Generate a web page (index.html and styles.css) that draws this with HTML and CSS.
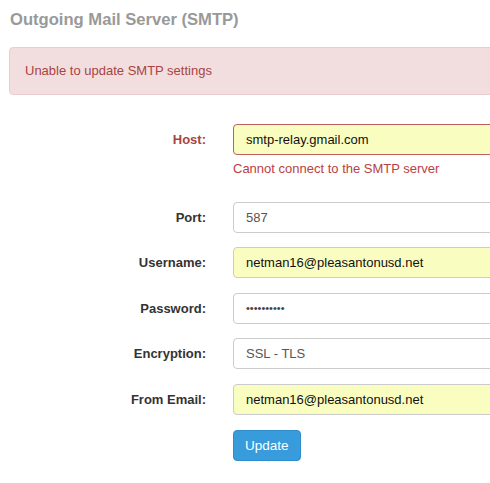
FILE: index.html
```html
<!DOCTYPE html>
<html>
<head>
<meta charset="utf-8">
<link rel="stylesheet" href="styles.css">
</head>
<body>
<div class="page">
  <h3 class="title">Outgoing Mail Server (SMTP)</h3>
  <div class="alert">Unable to update SMTP settings</div>
  <form class="form">
    <div class="row has-error">
      <label class="label">Host:</label>
      <div class="field">
        <div class="input autofill">smtp-relay.gmail.com</div>
        <div class="help">Cannot connect to the SMTP server</div>
      </div>
    </div>
    <div class="row">
      <label class="label">Port:</label>
      <div class="field"><div class="input plain">587</div></div>
    </div>
    <div class="row">
      <label class="label">Username:</label>
      <div class="field"><div class="input autofill">netman16@pleasantonusd.net</div></div>
    </div>
    <div class="row">
      <label class="label">Password:</label>
      <div class="field"><div class="input password">••••••••••</div></div>
    </div>
    <div class="row">
      <label class="label">Encryption:</label>
      <div class="field"><div class="input select">SSL - TLS</div></div>
    </div>
    <div class="row">
      <label class="label">From Email:</label>
      <div class="field"><div class="input autofill">netman16@pleasantonusd.net</div></div>
    </div>
    <div class="row">
      <span class="label"></span>
      <div class="field"><button type="button" class="btn">Update</button></div>
    </div>
  </form>
</div>
</body>
</html>
```
FILE: styles.css
```css
html, body {
  margin: 0;
  padding: 0;
  overflow: hidden;
  background: #fff;
}
body {
  font-family: "Liberation Sans", Arial, sans-serif;
  font-size: 13px;
  color: #333;
}
.page {
  padding: 9px 0 0 9px;
  overflow: hidden;
}
.title {
  margin: 0 0 0 1px;
  font-size: 16.6px;
  line-height: 22px;
  font-weight: bold;
  color: #999;
}
.alert {
  margin-top: 16px;
  margin-right: -20px;
  height: 46px;
  line-height: 46px;
  padding: 0 15px;
  background: #f2dede;
  border: 1px solid #ebccd1;
  border-radius: 4px;
  color: #a94442;
  font-size: 13px;
}
.form {
  margin-top: 29px;
}
.row {
  display: flex;
  align-items: flex-start;
  margin-bottom: 14.6px;
}
.label {
  width: 197px;
  flex: none;
  text-align: right;
  font-weight: bold;
  line-height: 31px;
  color: #333;
}
.field {
  margin-left: 27px;
  width: 320px;
  flex: none;
}
.input {
  box-sizing: border-box;
  height: 31px;
  line-height: 29px;
  padding: 0 12px;
  border: 1px solid #ccc;
  border-radius: 4px;
  font-size: 13px;
  color: #555;
  background: #fff;
}
.input.autofill {
  background: #fafdc0;
  color: #111;
}
.has-error .label {
  color: #a94442;
}
.has-error .input {
  border-color: #c0605c;
}
.password {
  font-size: 11px;
  color: #444;
}
.help {
  margin-top: 4px;
  margin-bottom: 9px;
  line-height: 19px;
  color: #b9413e;
  font-size: 13px;
}
.btn {
  box-sizing: border-box;
  height: 31px;
  padding: 0 11px;
  background: #389bdb;
  border: 1px solid #2f8dcb;
  border-radius: 4px;
  color: #fff;
  font-family: "Liberation Sans", Arial, sans-serif;
  font-size: 13.5px;
}
```
